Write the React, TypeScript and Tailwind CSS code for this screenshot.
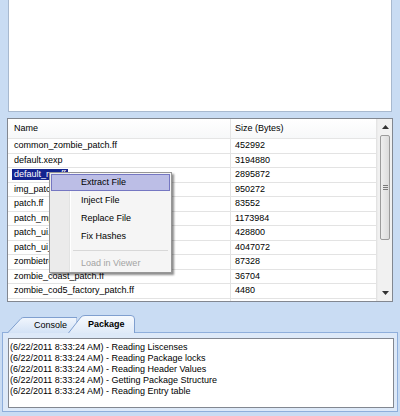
import React from "react";

const files: { name: string; size: string }[] = [
  { name: "common_zombie_patch.ff", size: "452992" },
  { name: "default.xexp", size: "3194880" },
  { name: "default_mp.ff", size: "2895872" },
  { name: "img_patch.ff", size: "950272" },
  { name: "patch.ff", size: "83552" },
  { name: "patch_mp.ff", size: "1173984" },
  { name: "patch_ui.ff", size: "428800" },
  { name: "patch_ui_mp.ff", size: "4047072" },
  { name: "zombietron_patch.ff", size: "87328" },
  { name: "zombie_coast_patch.ff", size: "36704" },
  { name: "zombie_cod5_factory_patch.ff", size: "4480" },
  { name: "zombie_cod5_prototype_patch.ff", size: "4736" },
];

const logLines = [
  "(6/22/2011 8:33:24 AM) - Reading Liscenses",
  "(6/22/2011 8:33:24 AM) - Reading Package locks",
  "(6/22/2011 8:33:24 AM) - Reading Header Values",
  "(6/22/2011 8:33:24 AM) - Getting Package Structure",
  "(6/22/2011 8:33:24 AM) - Reading Entry table",
];

const menuItems = ["Extract File", "Inject File", "Replace File", "Fix Hashes"];

const App: React.FC = () => {
  return (
    <div className="w-[400px] h-[416px] overflow-hidden flex flex-col bg-[#c9dcf3] font-['Liberation_Sans',Arial,sans-serif] text-[9px] text-black leading-none">
      {/* top preview panel */}
      <div className="mx-[8px] h-[112px] shrink-0 bg-white border-x border-b border-[#a8b9cf]" />

      {/* file list */}
      <div className="relative mx-[7px] mt-[6px] h-[184px] shrink-0 flex border border-[#828790] bg-white">
        <div className="flex flex-col overflow-hidden">
          <div className="flex h-[20px] shrink-0 border-b border-[#e5e5e5] bg-gradient-to-b from-white to-[#f7f8f9]">
            <div className="w-[223px] border-r border-[#e5e5e5] pl-[6px] flex items-center">Name</div>
            <div className="w-[146px] border-r border-[#e5e5e5] pl-[4px] flex items-center">Size (Bytes)</div>
          </div>
          {files.map((f, i) => (
            <div key={f.name} className="flex h-[14.5px] shrink-0 border-b border-[#e3e3e3]">
              <div className="w-[223px] border-r border-[#e3e3e3] pl-[4px] flex items-center">
                {i === 2 ? (
                  <span className="bg-[#14248f] text-white px-[2px] py-[1px]">{f.name}</span>
                ) : (
                  <span className="px-[2px]">{f.name}</span>
                )}
              </div>
              <div className="w-[146px] border-r border-[#e3e3e3] pl-[4px] flex items-center">{f.size}</div>
            </div>
          ))}
        </div>

        {/* scrollbar */}
        <div className="w-[15px] flex flex-col bg-[#f1f1f1] border-l border-[#ececec]">
          <div className="h-[16px] flex items-center justify-center">
            <svg width="7" height="4" viewBox="0 0 7 4">
              <path d="M0 4 L3.5 0 L7 4 Z" fill="#333" />
            </svg>
          </div>
          <div className="mx-[2px] h-[105px] rounded-[2px] border border-[#9b9b9b] bg-gradient-to-r from-[#eeeeee] to-[#dcdcdc] flex flex-col items-center justify-center gap-[1px]">
            <div className="w-[5px] h-px bg-[#7a7a7a]" />
            <div className="w-[5px] h-px bg-[#7a7a7a]" />
            <div className="w-[5px] h-px bg-[#7a7a7a]" />
          </div>
          <div className="flex-1" />
          <div className="h-[16px] flex items-center justify-center">
            <svg width="7" height="4" viewBox="0 0 7 4">
              <path d="M0 0 L7 0 L3.5 4 Z" fill="#333" />
            </svg>
          </div>
        </div>

        {/* context menu */}
        <div className="absolute left-[41px] top-[53px] w-[123px] h-[101px] border border-[#979797] bg-[#f5f5f5] shadow-[2px_2px_2px_rgba(0,0,0,0.45)] flex">
          <div className="w-[20px] bg-[#ebebeb] border-r border-[#e2e3e3]" />
          <div className="w-px bg-white" />
          <div className="flex-1" />
          <div className="absolute inset-0 flex flex-col pt-[1px] px-[1px]">
            {menuItems.map((m, i) => (
              <div
                key={m}
                className={
                  i === 0
                    ? "h-[17px] mb-[1px] flex items-center pl-[29px] bg-[#bcbee6] border border-[#7577c2]"
                    : "h-[17px] mb-[1px] flex items-center pl-[30px]"
                }
              >
                {m}
              </div>
            ))}
            <div className="h-[9px] flex items-center pl-[22px] pr-[2px]">
              <div className="flex-1 h-px bg-[#d8d8d8]" />
            </div>
            <div className="h-[17px] flex items-center pl-[30px] text-[#a3a3a3]">Load in Viewer</div>
          </div>
        </div>
      </div>

      {/* tabs */}
      <div className="mt-[13px] h-[18px] shrink-0 flex items-end pl-[7px]">
        <div className="relative w-[70px] h-[16px]">
          <svg className="absolute inset-0" width="70" height="16" viewBox="0 0 70 16">
            <defs>
              <linearGradient id="tc" x1="0" y1="0" x2="0" y2="1">
                <stop offset="0" stopColor="#f1f6fd" />
                <stop offset="1" stopColor="#d3e2f5" />
              </linearGradient>
            </defs>
            <path d="M0.5 16 L14 1.5 Q15 0.5 17 0.5 L70 0.5 L70 16" fill="url(#tc)" stroke="#7f9fcf" />
          </svg>
          <span className="relative flex h-full items-center pl-[27px] pt-[1px]">Console</span>
        </div>
        <div className="relative z-10 -ml-[9px] w-[67px] h-[18px]">
          <svg className="absolute inset-0" width="67" height="18" viewBox="0 0 67 18">
            <defs>
              <linearGradient id="tp" x1="0" y1="0" x2="0" y2="1">
                <stop offset="0" stopColor="#f7fafe" />
                <stop offset="1" stopColor="#dfeaf8" />
              </linearGradient>
            </defs>
            <path d="M0.5 18 L13 2 Q14.5 0.5 17 0.5 L63 0.5 Q66.5 0.5 66.5 4 L66.5 18" fill="url(#tp)" stroke="#7f9fcf" />
          </svg>
          <span className="relative flex h-full items-center pl-[20px] pt-[1px] font-bold">Package</span>
        </div>
      </div>

      {/* tab panel */}
      <div className="mx-[2px] w-[396px] h-[80px] shrink-0 -mt-px border border-[#8eaedb] bg-[#dde9f8] pl-[5px] pr-[3px] pt-[5px] pb-[3px]">
        <div className="h-full border border-[#828790] bg-white pl-[1px] pt-[3px]">
          {logLines.map((l) => (
            <div key={l} className="h-[11px] flex items-center whitespace-nowrap">
              {l}
            </div>
          ))}
        </div>
      </div>
    </div>
  );
};

export default App;
